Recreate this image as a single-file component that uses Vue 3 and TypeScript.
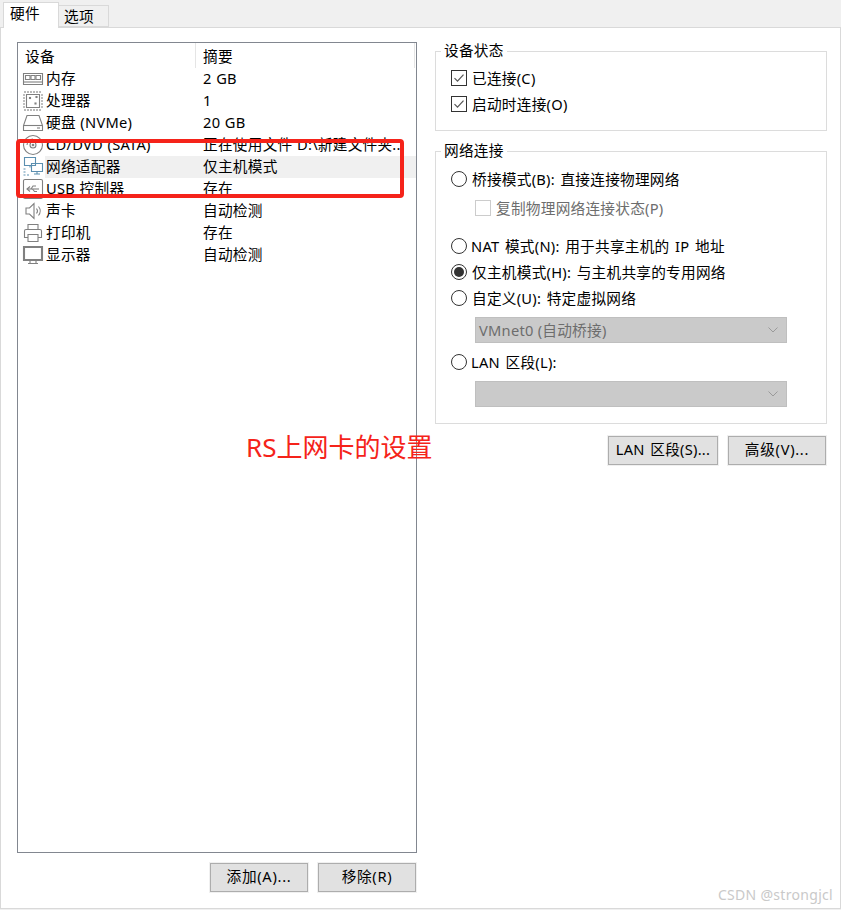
<template>
  <div class="page">
    <div class="tabs">
      <div class="tab active">硬件</div>
      <div class="tab">选项</div>
    </div>

    <div class="panel">
      <div class="left-col">
        <div class="device-list">
          <div class="list-head">
            <span class="head-device">设备</span>
            <span class="head-summary">摘要</span>
          </div>
          <div
            v-for="device in devices"
            :key="device.name"
            class="device-row"
          >
            <svg class="device-icon" viewBox="0 0 22 22" fill="none" stroke-width="1.1" :stroke="device.stroke || '#808080'">
              <path v-for="d in device.paths" :key="d" :d="d"></path>
            </svg>
            <div :class="['row-body', { selected: device.selected }]">
              <span class="device-name">{{ device.name }}</span>
              <span class="device-summary">{{ device.summary }}</span>
            </div>
          </div>
        </div>
        <div class="button-row">
          <button type="button" class="win-btn add-btn">添加(A)...</button>
          <button type="button" class="win-btn add-btn">移除(R)</button>
        </div>
      </div>

      <div class="right-col">
        <fieldset class="group status-group">
          <legend>设备状态</legend>
          <div v-for="item in statusItems" :key="item" class="option-row">
            <span class="check-box">
              <svg viewBox="0 0 14 14" fill="none" stroke="#555" stroke-width="1.2"><path d="M2.5 7.2l3 3 6-6.5"></path></svg>
            </span>
            <span class="option-label">{{ item }}</span>
          </div>
        </fieldset>

        <fieldset class="group network-group">
          <legend>网络连接</legend>
          <div class="option-row">
            <span class="radio"></span>
            <span class="option-label">桥接模式(B): 直接连接物理网络</span>
          </div>
          <div class="option-row sub-option">
            <span class="check-box disabled"></span>
            <span class="option-label">复制物理网络连接状态(P)</span>
          </div>
          <div class="option-row nat-row">
            <span class="radio"></span>
            <span class="option-label">NAT 模式(N): 用于共享主机的 IP 地址</span>
          </div>
          <div class="option-row">
            <span class="radio checked"></span>
            <span class="option-label">仅主机模式(H): 与主机共享的专用网络</span>
          </div>
          <div class="option-row">
            <span class="radio"></span>
            <span class="option-label">自定义(U): 特定虚拟网络</span>
          </div>
          <div class="fake-select">
            <span>VMnet0 (自动桥接)</span>
            <svg class="chevron" viewBox="0 0 10 6" fill="none" stroke="#9a9a9a" stroke-width="1"><path d="M0.5 0.5L5 5l4.5-4.5"></path></svg>
          </div>
          <div class="option-row lan-row">
            <span class="radio"></span>
            <span class="option-label">LAN 区段(L):</span>
          </div>
          <div class="fake-select">
            <span></span>
            <svg class="chevron" viewBox="0 0 10 6" fill="none" stroke="#9a9a9a" stroke-width="1"><path d="M0.5 0.5L5 5l4.5-4.5"></path></svg>
          </div>
        </fieldset>

        <div class="net-buttons">
          <button type="button" class="win-btn lan-btn">LAN 区段(S)...</button>
          <button type="button" class="win-btn adv-btn">高级(V)...</button>
        </div>
      </div>
    </div>

    <div class="red-box"></div>
    <div class="red-note">RS上网卡的设置</div>
    <div class="watermark">CSDN @strongjcl</div>
  </div>
</template>

<script setup lang="ts">
interface Device {
  name: string
  summary: string
  paths: string[]
  stroke?: string
  selected?: boolean
}

const devices: Device[] = [
  {
    name: '内存',
    summary: '2 GB',
    paths: ['M1.5 5.5h19v11h-19z', 'M3.5 7.5h4.5v4H3.5z', 'M9 7.5h4v4H9z', 'M14 7.5h4.5v4H14z', 'M1.5 14h19']
  },
  {
    name: '处理器',
    summary: '1',
    paths: ['M4.5 4.5h13v13h-13z', 'M7.5 7.5h1v1h-1z', 'M13 13h1v1h-1z', 'M14 6.5h1v1h-1z', 'M3 1v2M6 1v2M9 1v2M12 1v2M15 1v2M18 1v2M3 19v2M6 19v2M9 19v2M12 19v2M15 19v2M18 19v2M1 5h2M1 8h2M1 11h2M1 14h2M1 17h2M19 5h2M19 8h2M19 11h2M19 14h2M19 17h2']
  },
  {
    name: '硬盘 (NVMe)',
    summary: '20 GB',
    paths: ['M5 3.5h12l3.5 10v5h-19v-5z', 'M1.5 13.5h19', 'M15 16h3']
  },
  {
    name: 'CD/DVD (SATA)',
    summary: '正在使用文件 D:\\新建文件夹...',
    paths: ['M11 1.5a9.5 9.5 0 1 0 0 19a9.5 9.5 0 1 0 0-19z', 'M11 8a3 3 0 1 0 0 6a3 3 0 1 0 0-6z', 'M11 10.2a.8.8 0 1 0 0 1.6a.8.8 0 1 0 0-1.6z', 'M5 11a6 6 0 0 1 6-6']
  },
  {
    name: '网络适配器',
    summary: '仅主机模式',
    selected: true,
    stroke: '#5b8fb0',
    paths: ['M2.5 1.5h11v8h-11z', 'M9.5 7.5h11v8h-11z', 'M15 15.5v2M12 18h6', 'M8 9.5v2', 'M1.5 13h2M1.5 16h2M1.5 19h2M5 19h2']
  },
  {
    name: 'USB 控制器',
    summary: '存在',
    paths: ['M3 1.5h16a1.5 1.5 0 0 1 1.5 1.5v16a1.5 1.5 0 0 1-1.5 1.5H3A1.5 1.5 0 0 1 1.5 19V3A1.5 1.5 0 0 1 3 1.5z', 'M5 11h12', 'M8 8.5L5 11l3 2.5', 'M9 11l2-3h3', 'M10.5 11l2 2.5h2.5']
  },
  {
    name: '声卡',
    summary: '自动检测',
    paths: ['M4 8h3.5L12 3.5v15L7.5 14H4z', 'M14.5 8.5a4 4 0 0 1 0 5', 'M16.5 6.5a7 7 0 0 1 0 9']
  },
  {
    name: '打印机',
    summary: '存在',
    paths: ['M6 7.5v-5h10v5', 'M6 15.5H2.5v-6.5a1.5 1.5 0 0 1 1.5-1.5h14a1.5 1.5 0 0 1 1.5 1.5v6.5H16', 'M6 12.5h10v7H6z']
  },
  {
    name: '显示器',
    summary: '自动检测',
    paths: ['M1.5 2.5h19v14h-19z', 'M2.5 3.5h17v12h-17z', 'M8 17v2M14 17v2M6 19.5h10']
  }
]

const statusItems = ['已连接(C)', '启动时连接(O)']
</script>

<style>
html,
body {
  margin: 0;
  background: #ffffff;
}
</style>

<style scoped>
* {
  box-sizing: border-box;
}

.page {
  position: relative;
  width: 841px;
  height: 910px;
  overflow: hidden;
  display: flex;
  flex-direction: column;
  background: #f0f0f0;
  font-family: "Noto Sans", "Noto Sans CJK SC", sans-serif;
  font-size: 14.67px;
  line-height: 22px;
  letter-spacing: 0.25px;
  word-spacing: 1.5px;
  color: #000000;
}

.tabs {
  height: 27px;
  padding-left: 3px;
  display: flex;
  align-items: flex-end;
  flex-shrink: 0;
}

.tab {
  width: 50px;
  height: 22px;
  padding-left: 5px;
  border: 1px solid #d9d9d9;
  border-left: none;
  background: #f0f0f0;
  line-height: 21px;
}

.tab.active {
  width: 56px;
  height: 26px;
  margin-bottom: -1px;
  padding-left: 6px;
  border: 1px solid #d9d9d9;
  border-bottom: none;
  background: #ffffff;
  line-height: 20px;
  position: relative;
  z-index: 1;
}

.panel {
  height: 882px;
  margin-bottom: 1px;
  padding: 14px 0 0 16px;
  border: 1px solid #d9d9d9;
  background: #ffffff;
  display: flex;
  gap: 18px;
}

.left-col {
  width: 400px;
  display: flex;
  flex-direction: column;
  gap: 10px;
}

.device-list {
  height: 811px;
  border: 1px solid #828790;
  background: #ffffff;
  word-spacing: 0.5px;
}

.list-head {
  height: 25px;
  display: flex;
  align-items: stretch;
}

.head-device {
  width: 178px;
  padding-left: 7px;
  border-right: 1px solid #e5e5e5;
  line-height: 26px;
}

.head-summary {
  flex: 1;
  padding-left: 7px;
  border-right: 1px solid #e5e5e5;
  margin-right: 1px;
  line-height: 26px;
}

.device-row {
  height: 22px;
  padding-left: 4px;
  display: flex;
  align-items: center;
}

.device-icon {
  width: 22px;
  height: 22px;
  flex-shrink: 0;
}

.row-body {
  flex: 1;
  min-width: 0;
  height: 22px;
  margin-left: 1px;
  line-height: 20px;
  display: flex;
}

.row-body.selected {
  background: #f0f0f0;
}

.device-name {
  width: 158px;
  padding-left: 1px;
  flex-shrink: 0;
  white-space: nowrap;
}

.device-summary {
  white-space: nowrap;
}

.button-row {
  display: flex;
  justify-content: flex-end;
  gap: 10px;
  padding-right: 1px;
}

.win-btn {
  height: 29px;
  padding: 0 0 3px;
  border: 1px solid #adadad;
  outline: 1px solid #f0f0f0;
  background: #e1e1e1;
  font: inherit;
  letter-spacing: inherit;
  word-spacing: inherit;
  color: #000000;
}

.add-btn {
  width: 98px;
  letter-spacing: 0.7px;
}

.right-col {
  width: 392px;
}

.group {
  margin: 0;
  padding: 0 0 0 15px;
  border: 1px solid #dcdcdc;
  min-width: 0;
}

.group legend {
  margin-left: -10px;
  padding: 0 3px 2px;
  line-height: 20px;
}

.status-group {
  height: 91px;
  margin-top: -2px;
  margin-bottom: 9px;
  padding-top: 3px;
}

.network-group {
  height: 284px;
  padding-top: 4px;
}

.option-row {
  height: 26px;
  display: flex;
  align-items: center;
  gap: 5px;
  white-space: nowrap;
}

.option-label {
  margin-top: -1px;
}

.sub-option {
  height: 26px;
  margin-top: 3px;
  padding-left: 24px;
  color: #6d6d6d;
}

.nat-row {
  margin-top: 12px;
  gap: 4px;
}

.check-box {
  width: 16px;
  height: 16px;
  flex-shrink: 0;
  border: 1px solid #333333;
  background: #ffffff;
  display: block;
}

.check-box svg {
  display: block;
  width: 14px;
  height: 14px;
}

.check-box.disabled {
  border-color: #cccccc;
}

.radio {
  width: 16px;
  height: 16px;
  flex-shrink: 0;
  border: 1px solid #333333;
  border-radius: 50%;
  background: #ffffff;
  display: flex;
  align-items: center;
  justify-content: center;
}

.radio.checked::after {
  content: "";
  width: 10px;
  height: 10px;
  border-radius: 50%;
  background: #333333;
}

.fake-select {
  width: 312px;
  height: 26px;
  margin: 6px 0 0 24px;
  padding: 0 4px 0 3px;
  border: 1px solid #bfbfbf;
  background: #cacaca;
  color: #6d6d6d;
  word-spacing: 0;
  display: flex;
  align-items: center;
  justify-content: space-between;
  white-space: nowrap;
}

.chevron {
  width: 10px;
  height: 6px;
  margin-right: 4px;
}

.lan-row {
  margin-top: 6px;
  gap: 4px;
}

.net-buttons {
  margin-top: 12px;
  padding-right: 1px;
  display: flex;
  justify-content: flex-end;
  gap: 10px;
}

.lan-btn {
  width: 110px;
}

.adv-btn {
  width: 98px;
  letter-spacing: 0.7px;
}

.red-box {
  position: absolute;
  left: 16px;
  top: 139px;
  width: 388px;
  height: 59px;
  border: 4px solid #f5231a;
  border-radius: 4px;
}

.red-note {
  position: absolute;
  left: 246px;
  top: 432px;
  font-size: 26px;
  line-height: 30px;
  letter-spacing: 0;
  word-spacing: 0;
  color: #f5231a;
  white-space: nowrap;
}

.watermark {
  position: absolute;
  right: 8px;
  top: 885px;
  font-size: 14px;
  line-height: 20px;
  letter-spacing: 0.3px;
  word-spacing: 0;
  color: #c9c9c9;
  white-space: nowrap;
}
</style>
